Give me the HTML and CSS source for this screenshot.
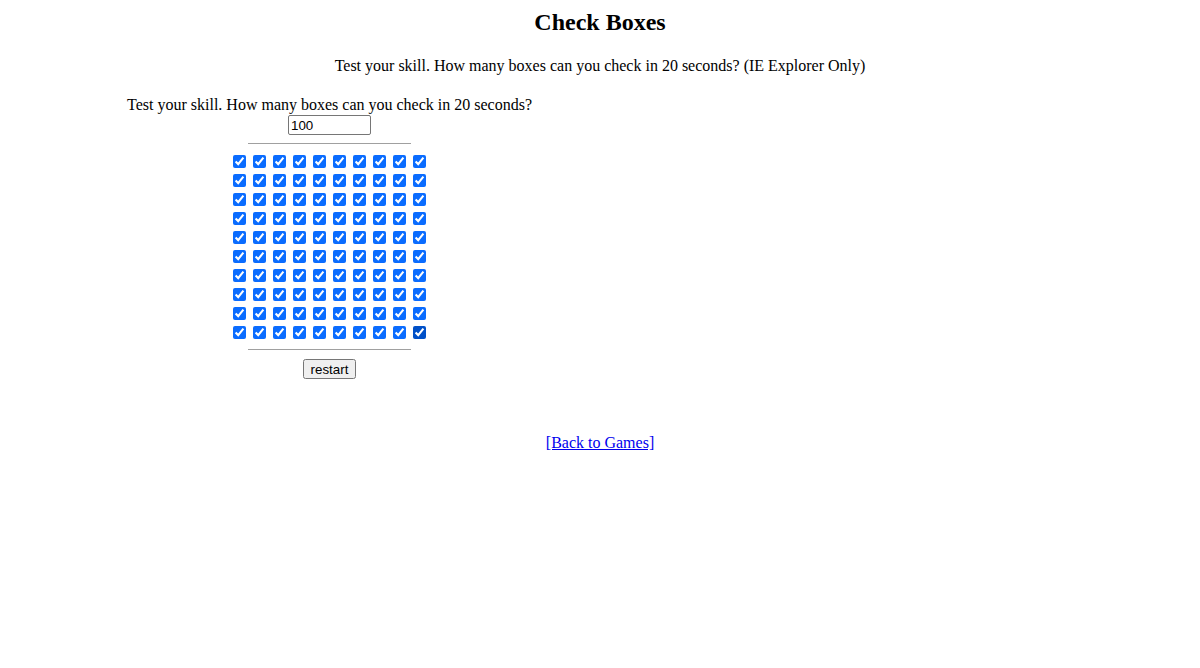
FILE: index.html
```html
<!DOCTYPE html>
<html>
<head>
<meta charset="utf-8">
<title>Check Boxes</title>
<link rel="stylesheet" href="styles.css">
</head>
<body>
<h1 class="title">Check Boxes</h1>
<p class="intro">Test your skill. How many boxes can you check in 20 seconds? (IE Explorer Only)</p>
<div class="game">
  <div class="prompt">Test your skill. How many boxes can you check in 20 seconds?</div>
  <div class="count"><input class="count-input" type="text" value="100"></div>
  <hr class="rule">
  <div class="grid" id="grid"></div>
  <hr class="rule">
  <div class="actions"><button class="restart" type="button">restart</button></div>
</div>
<div class="back"><a class="back-link" href="#">[Back to Games]</a></div>
<script src="script.js"></script>
</body>
</html>
```
FILE: script.js
```js
var grid = document.getElementById('grid');
for (var r = 0; r < 10; r++) {
  var row = document.createElement('div');
  row.className = 'grid-row';
  for (var c = 0; c < 10; c++) {
    var cb = document.createElement('input');
    cb.type = 'checkbox';
    cb.className = 'box';
    cb.checked = true;
    if (r === 9 && c === 9) cb.className = 'box box-last';
    row.appendChild(cb);
  }
  grid.appendChild(row);
}
```
FILE: styles.css
```css
html, body {
  background: #fff;
}
body {
  margin: 8px;
  font-family: "Liberation Serif", "Times New Roman", serif;
  font-size: 16px;
  color: #000;
}
.title {
  font-size: 24px;
  font-weight: bold;
  text-align: center;
  margin: 0;
  padding-top: 1px;
}
.intro {
  text-align: center;
  margin: 21px 0 0 0;
}
.game {
  display: flex;
  flex-direction: column;
  align-items: center;
  width: max-content;
  margin-left: 119px;
  margin-top: 21px;
}
.count {
  height: 21px;
  margin-top: 1px;
}
.count-input {
  width: 83px;
  height: 20px;
  box-sizing: border-box;
  font-family: "Liberation Sans", Arial, sans-serif;
  font-size: 13.33px;
  padding: 1px 2px;
  border: 1px solid #767676;
  border-radius: 2px;
  margin: 0;
}
.rule {
  width: 163px;
  border: none;
  border-top: 1px solid #a0a0a0;
  margin: 7px 0 8px 0;
  height: 0;
}
.grid {
  display: flex;
  flex-direction: column;
  margin-right: 2px;
}
.grid-row {
  display: flex;
}
.box {
  width: 13px;
  height: 13px;
  margin: 3px 3px 3px 4px;
  accent-color: #0a6cff;
}
.box-last {
  accent-color: #0050c8;
}
.actions {
  margin-top: 1px;
}
.restart {
  font-family: "Liberation Sans", Arial, sans-serif;
  font-size: 13.33px;
  height: 20px;
  padding: 1px 6px;
  margin: 0;
}
.back {
  text-align: center;
  margin-top: 55px;
}
.back-link {
  color: #0000ee;
}
```
